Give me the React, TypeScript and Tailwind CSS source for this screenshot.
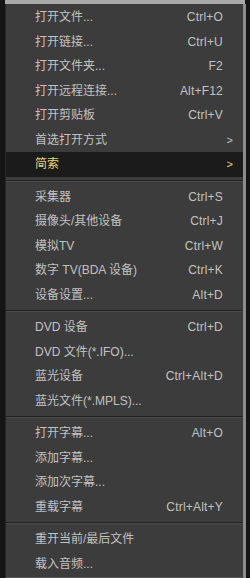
import React from 'react';

type Item =
  | { kind: 'item'; label: string; shortcut?: string; sub?: boolean; active?: boolean }
  | { kind: 'sep' };

const items: Item[] = [
  { kind: 'item', label: '打开文件...', shortcut: 'Ctrl+O' },
  { kind: 'item', label: '打开链接...', shortcut: 'Ctrl+U' },
  { kind: 'item', label: '打开文件夹...', shortcut: 'F2' },
  { kind: 'item', label: '打开远程连接...', shortcut: 'Alt+F12' },
  { kind: 'item', label: '打开剪贴板', shortcut: 'Ctrl+V' },
  { kind: 'item', label: '首选打开方式', sub: true },
  { kind: 'item', label: '简索', sub: true, active: true },
  { kind: 'sep' },
  { kind: 'item', label: '采集器', shortcut: 'Ctrl+S' },
  { kind: 'item', label: '摄像头/其他设备', shortcut: 'Ctrl+J' },
  { kind: 'item', label: '模拟TV', shortcut: 'Ctrl+W' },
  { kind: 'item', label: '数字 TV(BDA 设备)', shortcut: 'Ctrl+K' },
  { kind: 'item', label: '设备设置...', shortcut: 'Alt+D' },
  { kind: 'sep' },
  { kind: 'item', label: 'DVD 设备', shortcut: 'Ctrl+D' },
  { kind: 'item', label: 'DVD 文件(*.IFO)...' },
  { kind: 'item', label: '蓝光设备', shortcut: 'Ctrl+Alt+D' },
  { kind: 'item', label: '蓝光文件(*.MPLS)...' },
  { kind: 'sep' },
  { kind: 'item', label: '打开字幕...', shortcut: 'Alt+O' },
  { kind: 'item', label: '添加字幕...' },
  { kind: 'item', label: '添加次字幕...' },
  { kind: 'item', label: '重载字幕', shortcut: 'Ctrl+Alt+Y' },
  { kind: 'sep' },
  { kind: 'item', label: '重开当前/最后文件' },
  { kind: 'item', label: '载入音频...' },
];

export default function App() {
  return (
    <div className="w-[250px] h-[578px] bg-[#151515] font-['Segoe_UI','Liberation_Sans','Noto_Sans_CJK_SC',sans-serif] text-[12px] overflow-hidden">
      <div className="h-[4px] ml-[5px] mr-[5px] bg-[#a9a9a9]" />
      <div className="ml-[5px] w-[241px] border-l border-[#262626] border-r-[3px] border-r-[#8c8c8c] border-b-2 border-b-[#5a5a5a] bg-[#3c3c3c] pt-px pb-[1px]">
        {items.map((it, i) =>
          it.kind === 'sep' ? (
            <div key={i} className="h-[8px] flex flex-col justify-center">
              <div className="h-px bg-[#232323]" />
              <div className="h-px bg-[#4a4a4a]" />
            </div>
          ) : (
            <div
              key={i}
              className={
                'h-[24.5px] flex items-center pl-[29px] ' +
                (it.active ? 'bg-[#1b1b1b] text-[#e7d67f]' : 'text-[#c2c2c2]') +
                (it.sub ? ' pr-[10px]' : ' pr-[20px]')
              }
            >
              <span className="flex-1 whitespace-nowrap">{it.label}</span>
              {it.shortcut && <span className="whitespace-nowrap tracking-[0.2px]">{it.shortcut}</span>}
              {it.sub && <span className="text-[11px]">&gt;</span>}
            </div>
          )
        )}
      </div>
    </div>
  );
}
